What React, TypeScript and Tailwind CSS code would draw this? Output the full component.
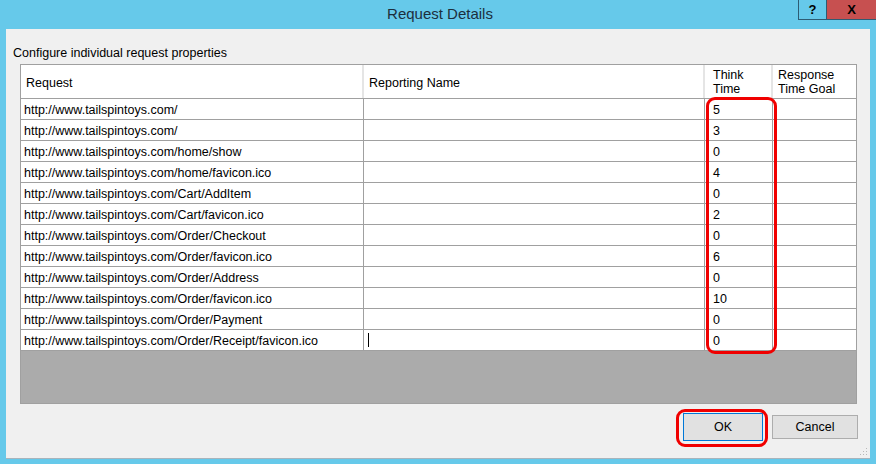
import React from 'react';

const rows: { url: string; think: string }[] = [
  { url: 'http://www.tailspintoys.com/', think: '5' },
  { url: 'http://www.tailspintoys.com/', think: '3' },
  { url: 'http://www.tailspintoys.com/home/show', think: '0' },
  { url: 'http://www.tailspintoys.com/home/favicon.ico', think: '4' },
  { url: 'http://www.tailspintoys.com/Cart/AddItem', think: '0' },
  { url: 'http://www.tailspintoys.com/Cart/favicon.ico', think: '2' },
  { url: 'http://www.tailspintoys.com/Order/Checkout', think: '0' },
  { url: 'http://www.tailspintoys.com/Order/favicon.ico', think: '6' },
  { url: 'http://www.tailspintoys.com/Order/Address', think: '0' },
  { url: 'http://www.tailspintoys.com/Order/favicon.ico', think: '10' },
  { url: 'http://www.tailspintoys.com/Order/Payment', think: '0' },
  { url: 'http://www.tailspintoys.com/Order/Receipt/favicon.ico', think: '0' },
];

const font = { fontFamily: '"Liberation Sans", Arial, sans-serif' };

export default function App() {
  return (
    <div className="w-[876px] h-[464px] bg-[#66c9ea] flex flex-col overflow-hidden" style={font}>
      {/* title bar */}
      <div className="relative h-[29px] flex items-center justify-center shrink-0">
        <span className="text-[15px] text-[#1c2f3d] pl-[4px]">Request Details</span>
        <div className="absolute right-0 top-0 flex">
          <div className="w-[29px] h-[20px] border border-[#2d5c73] border-t-0 flex items-center justify-center text-[13px] font-bold text-black">?</div>
          <div className="w-[49px] h-[20px] bg-[#c75050] border-b border-[#2d5c73] flex items-center justify-center text-[13px] font-bold text-black">X</div>
        </div>
      </div>

      {/* client area */}
      <div className="relative ml-[6px] w-[864px] h-[430px] bg-[#f0f0f0] border-b border-[#a8b4bc] flex flex-col">
        <div className="h-[35px] pl-[7px] pt-[17px] text-[12.5px] leading-[15px] text-black">Configure individual request properties</div>

        <div className="relative ml-[14px] w-[837px] h-[340px] border border-[#a0a0a0] bg-[#ababab] flex flex-col">
          {/* header */}
          <div className="flex h-[34px] bg-white border-b border-[#a0a0a0] text-[12.5px] leading-[14px] text-black">
            <div className="w-[343px] border-r-2 border-[#e5e5e5] flex items-center pl-[5px] pt-[3px]">Request</div>
            <div className="w-[341px] border-r-2 border-[#e5e5e5] flex items-center pl-[5px] pt-[3px]">Reporting Name</div>
            <div className="w-[68px] border-r-2 border-[#e5e5e5] pl-[8px] pt-[3px]">Think<br />Time</div>
            <div className="flex-1 pl-[5px] pt-[3px]">Response<br />Time Goal</div>
          </div>
          {rows.map((r, i) => (
            <div key={i} className="flex h-[21px] bg-white border-b border-[#a0a0a0] text-[12.5px] text-black">
              <div className="w-[343px] border-r border-[#a0a0a0] flex items-center pl-[3px] pt-[2px]">{r.url}</div>
              <div className="w-[341px] border-r border-[#a0a0a0] flex items-center pl-[4px]">
                {i === rows.length - 1 && <span className="w-px h-[14px] bg-black" />}
              </div>
              <div className="w-[68px] border-r border-[#a0a0a0] flex items-center pl-[8px] pt-[2px]">{r.think}</div>
              <div className="flex-1" />
            </div>
          ))}

          {/* highlight around Think Time */}
          <div className="absolute left-[685px] top-[32px] w-[71px] h-[257px] border-[3px] border-[#f00000] rounded-[9px]" />
        </div>

        {/* buttons */}
        <div className="flex justify-end gap-[9px] pr-[12px] pt-[11px]">
          <div className="relative">
            <div className="w-[80px] h-[28px] -mt-[2px] bg-[#e1e1e1] border border-[#0078d7] flex items-center justify-center text-[12.5px] text-black">OK</div>
            <div className="absolute -left-[7px] -top-[6px] w-[92px] h-[38px] border-[3px] border-[#f00000] rounded-[9px]" />
          </div>
          <div className="w-[86px] h-[24px] bg-[#e1e1e1] border border-[#adadad] flex items-center justify-center text-[12.5px] text-black">Cancel</div>
        </div>

        {/* resize grip */}
        <svg className="absolute right-[2px] bottom-[2px]" width="10" height="10" viewBox="0 0 10 10">
          <g fill="#b8b8b8">
            <rect x="8" y="2" width="1" height="1" />
            <rect x="5" y="5" width="1" height="1" />
            <rect x="8" y="5" width="1" height="1" />
            <rect x="2" y="8" width="1" height="1" />
            <rect x="5" y="8" width="1" height="1" />
            <rect x="8" y="8" width="1" height="1" />
          </g>
        </svg>
      </div>
    </div>
  );
}
